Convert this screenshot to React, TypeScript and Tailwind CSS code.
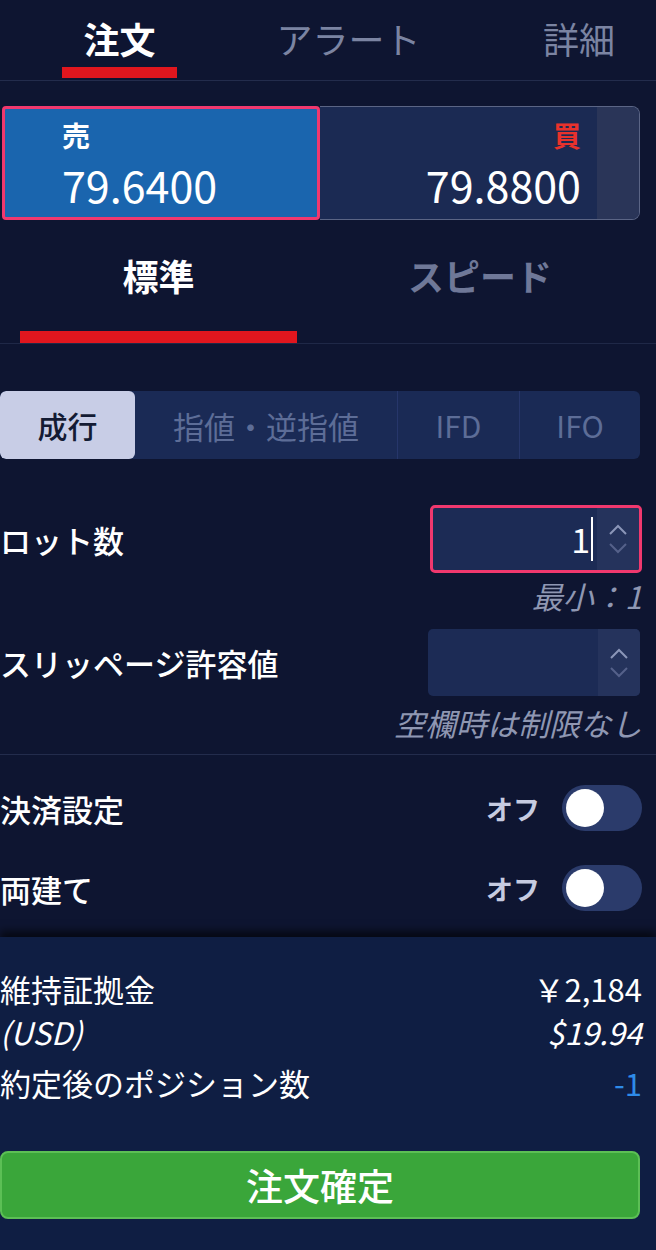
import React from 'react';

const font = { fontFamily: '"Noto Sans CJK JP", "Noto Sans", sans-serif' };

function Spinner() {
    return (
        <div className="w-[42px] h-full flex flex-col items-center justify-center gap-[6px] bg-[#25335c]">
            <svg width="22" height="12" viewBox="0 0 22 12" fill="none" stroke="#8b96b8" strokeWidth="2">
                <path d="M3 10 L11 2 L19 10" />
            </svg>
            <svg width="22" height="12" viewBox="0 0 22 12" fill="none" stroke="#55618a" strokeWidth="2">
                <path d="M3 2 L11 10 L19 2" />
            </svg>
        </div>
    );
}

function Toggle() {
    return (
        <div className="w-[80px] h-[46px] rounded-full bg-[#2b3b6b] flex items-center pl-[4px]">
            <div className="w-[38px] h-[38px] rounded-full bg-white" />
        </div>
    );
}

export default function App() {
    return (
        <div className="w-[656px] h-[1250px] bg-[#0e1531] text-white flex flex-col overflow-hidden" style={font}>
            {/* top tabs */}
            <div className="h-[81px] flex items-end border-b border-[#232c4c] whitespace-nowrap">
                <div className="ml-[62px] w-[115px] flex flex-col items-center">
                    <span className="text-[36px] font-bold leading-none mb-[11px]">注文</span>
                    <div className="w-full h-[11px] bg-[#e0161e] mb-[2px]" />
                </div>
                <div className="ml-[90px] w-[163px] flex flex-col items-center">
                    <span className="text-[36px] leading-none mb-[24px] text-[#7b84a2]">アラート</span>
                </div>
                <div className="ml-auto mr-[41px] flex flex-col items-center">
                    <span className="text-[36px] leading-none mb-[24px] text-[#7b84a2]">詳細</span>
                </div>
            </div>

            {/* sell / buy */}
            <div className="mt-[25px] ml-[2px] mr-[16px] h-[114px] flex">
                <div className="w-[318px] h-full border-[3px] border-[#f0386e] rounded-[4px] bg-[#1a65ae] flex flex-col justify-center pl-[57px]">
                    <span className="text-[28px] font-bold leading-none">売</span>
                    <span className="text-[43px] leading-none mt-[14px]">79.6400</span>
                </div>
                <div className="flex-1 h-full border-[1.5px] border-l-0 border-[#5b6585] rounded-r-[8px] bg-[#1b2a53] flex overflow-hidden">
                    <div className="flex-1 flex flex-col justify-center items-end pr-[16px]">
                        <span className="text-[28px] font-bold leading-none text-[#e8322c]">買</span>
                        <span className="text-[43px] leading-none mt-[14px]">79.8800</span>
                    </div>
                    <div className="w-[42px] h-full bg-[#2a3558]" />
                </div>
            </div>

            {/* standard / speed */}
            <div className="h-[124px] flex items-end border-b border-[#1f2847] whitespace-nowrap">
                <div className="ml-[20px] w-[277px] flex flex-col items-center">
                    <span className="text-[36px] font-bold leading-none mb-[38px]">標準</span>
                    <div className="w-full h-[12px] bg-[#e0161e]" />
                </div>
                <div className="ml-[23px] w-[320px] flex flex-col items-center">
                    <span className="text-[36px] font-bold leading-none mb-[50px] text-[#6f7898]">スピード</span>
                </div>
            </div>

            {/* order type */}
            <div className="mt-[47px] mr-[16px] h-[68px] flex rounded-[6px] bg-[#1a2a55] overflow-hidden text-[30px] leading-none whitespace-nowrap">
                <div className="w-[135px] bg-[#c8cde6] text-[#141b33] rounded-[6px] flex items-center justify-center font-medium">成行</div>
                <div className="w-[262px] flex items-center justify-center text-[#5d6d97] text-[31px]">指値・逆指値</div>
                <div className="w-[122px] border-l border-[#26366a] flex items-center justify-center text-[#5d6d97]">IFD</div>
                <div className="flex-1 border-l border-[#26366a] flex items-center justify-center text-[#5d6d97]">IFO</div>
            </div>

            {/* lot */}
            <div className="mt-[46px] mr-[14px] flex items-center justify-between">
                <span className="text-[31px] font-medium leading-none">ロット数</span>
                <div className="w-[212px] h-[68px] border-[3px] border-[#f0386e] rounded-[5px] bg-[#1c2b55] flex overflow-hidden">
                    <div className="flex-1 flex items-center justify-end pr-[4px]">
                        <span className="text-[34px] leading-none">1</span>
                        <div className="w-[2px] h-[44px] bg-white ml-[1px]" />
                    </div>
                    <Spinner />
                </div>
            </div>
            <div className="mr-[14px] mt-[7px] text-right text-[31px] italic leading-none text-[#8f97b2]">最小：1</div>

            {/* slippage */}
            <div className="mt-[18px] mr-[16px] flex items-center justify-between">
                <span className="text-[31px] font-medium leading-none">スリッページ許容値</span>
                <div className="w-[212px] h-[67px] rounded-[5px] bg-[#1c2b55] flex overflow-hidden">
                    <div className="flex-1" />
                    <Spinner />
                </div>
            </div>
            <div className="mr-[14px] mt-[11px] text-right text-[31px] italic leading-none text-[#8f97b2]">空欄時は制限なし</div>

            <div className="mt-[16px] border-b border-[#232c4c]" />

            {/* toggles */}
            <div className="mt-[30px] mr-[14px] flex items-center">
                <span className="text-[31px] font-medium leading-none">決済設定</span>
                <span className="ml-auto mr-[22px] text-[27px] font-bold leading-none text-[#c6cbe0]">オフ</span>
                <Toggle />
            </div>
            <div className="mt-[34px] mr-[14px] flex items-center">
                <span className="text-[31px] font-medium leading-none">両建て</span>
                <span className="ml-auto mr-[22px] text-[27px] font-bold leading-none text-[#c6cbe0]">オフ</span>
                <Toggle />
            </div>

            {/* summary */}
            <div className="mt-[26px] flex-1 bg-[#0f1e43] shadow-[0_-6px_8px_rgba(0,0,0,0.6)] pr-[14px] pt-[36px]">
                <div className="flex justify-between items-center text-[31px] leading-none">
                    <span>維持証拠金</span>
                    <span>￥2,184</span>
                </div>
                <div className="mt-[12px] flex justify-between items-center text-[31px] italic leading-none">
                    <span>(USD)</span>
                    <span>$19.94</span>
                </div>
                <div className="mt-[20px] flex justify-between items-center text-[31px] leading-none">
                    <span>約定後のポジション数</span>
                    <span className="text-[#2e8be8]">-1</span>
                </div>
                <div className="mt-[53px] mr-[2px] h-[68px] rounded-[8px] bg-[#3aa63a] border-[2px] border-[#5cbf55] flex items-center justify-center text-[37px] font-medium leading-none">
                    注文確定
                </div>
            </div>
        </div>
    );
}
